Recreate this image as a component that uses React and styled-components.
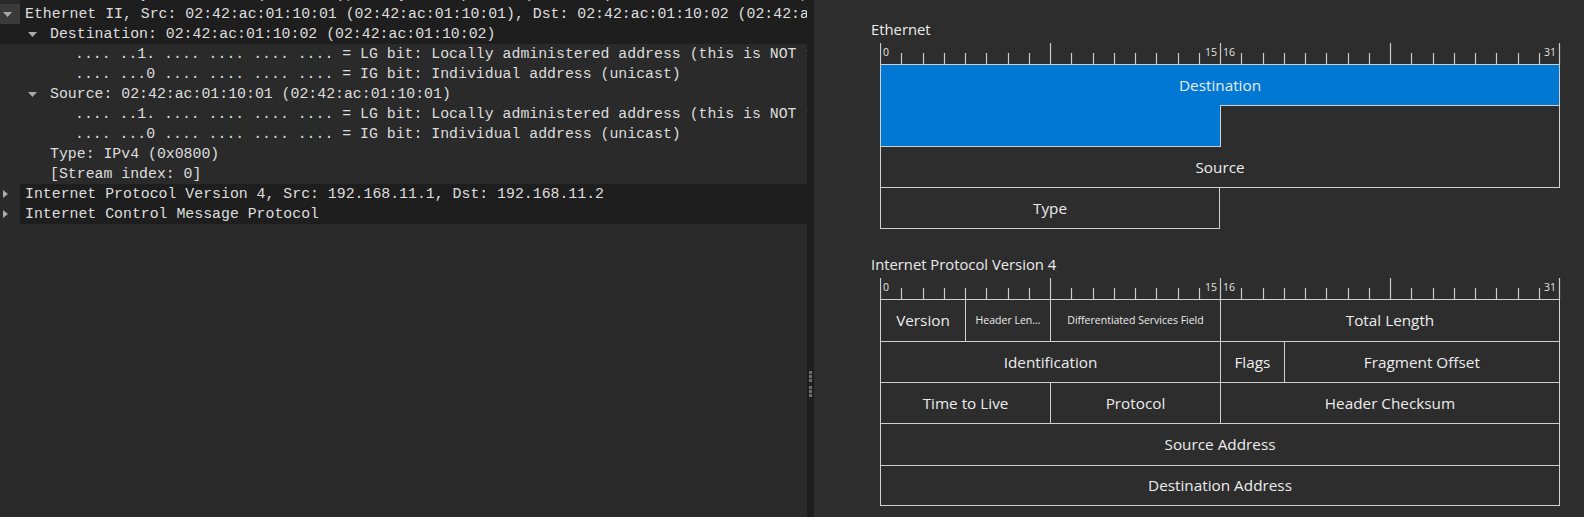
import React from 'react'
import styled, { createGlobalStyle } from 'styled-components'

const GlobalStyle = createGlobalStyle`
  html, body {
    margin: 0;
    padding: 0;
    background: #2a2a2a;
    overflow: hidden;
  }
`

const treeRows = [
  { level: 0, arrow: 'closed', top: true, text: 'Frame 1: 98 bytes on wire (784 bits), 98 bytes captured (784 bits) on interface br-4f2a, id 0' },
  { level: 0, arrow: 'open', top: true, hover: true, text: 'Ethernet II, Src: 02:42:ac:01:10:01 (02:42:ac:01:10:01), Dst: 02:42:ac:01:10:02 (02:42:ac:01:10:02)' },
  { level: 1, arrow: 'open', selected: true, text: 'Destination: 02:42:ac:01:10:02 (02:42:ac:01:10:02)' },
  { level: 2, text: '.... ..1. .... .... .... .... = LG bit: Locally administered address (this is NOT the factory default)' },
  { level: 2, text: '.... ...0 .... .... .... .... = IG bit: Individual address (unicast)' },
  { level: 1, arrow: 'open', text: 'Source: 02:42:ac:01:10:01 (02:42:ac:01:10:01)' },
  { level: 2, text: '.... ..1. .... .... .... .... = LG bit: Locally administered address (this is NOT the factory default)' },
  { level: 2, text: '.... ...0 .... .... .... .... = IG bit: Individual address (unicast)' },
  { level: 1, text: 'Type: IPv4 (0x0800)' },
  { level: 1, text: '[Stream index: 0]' },
  { level: 0, arrow: 'closed', top: true, text: 'Internet Protocol Version 4, Src: 192.168.11.1, Dst: 192.168.11.2' },
  { level: 0, arrow: 'closed', top: true, text: 'Internet Control Message Protocol' },
]

// t r b l = which edges of the segment get a line
const ethernetFields = [
  { row: 1, from: 1, to: 32, name: 'Destination', sel: true, t: 1, r: 1, l: 1 },
  { row: 2, from: 1, to: 16, sel: true, b: 1, l: 1 },
  { row: 2, from: 17, to: 32, t: 1, r: 1, l: 1 },
  { row: 3, from: 1, to: 32, name: 'Source', r: 1, b: 1, l: 1 },
  { row: 4, from: 1, to: 16, name: 'Type', r: 1, b: 1, l: 1 },
]

const ipv4Fields = [
  { row: 1, from: 1, to: 4, name: 'Version' },
  { row: 1, from: 5, to: 8, name: 'Header Len…', small: true },
  { row: 1, from: 9, to: 16, name: 'Differentiated Services Field', small: true },
  { row: 1, from: 17, to: 32, name: 'Total Length' },
  { row: 2, from: 1, to: 16, name: 'Identification' },
  { row: 2, from: 17, to: 19, name: 'Flags' },
  { row: 2, from: 20, to: 32, name: 'Fragment Offset' },
  { row: 3, from: 1, to: 8, name: 'Time to Live' },
  { row: 3, from: 9, to: 16, name: 'Protocol' },
  { row: 3, from: 17, to: 32, name: 'Header Checksum' },
  { row: 4, from: 1, to: 32, name: 'Source Address' },
  { row: 5, from: 1, to: 32, name: 'Destination Address' },
].map(f => ({ ...f, t: 1, l: 1, r: f.to === 32 ? 1 : 0, b: f.row === 5 ? 1 : 0 }))

const BIT = 21.25

const Arrow = ({ open }) =>
  open ? (
    <svg width="9" height="5" viewBox="0 0 9 5">
      <path d="M0 0H9L4.5 5Z" fill="#a9a9a9" />
    </svg>
  ) : (
    <svg width="5" height="8" viewBox="0 0 5 8">
      <path d="M0 0L5 4L0 8Z" fill="#a9a9a9" />
    </svg>
  )

const BitRuler = () => (
  <RulerSvg width="681" height="21" viewBox="0 0 681 21">
    {Array.from({ length: 33 }, (_, k) => {
      const x = Math.round(k * BIT) + 0.5 - (k === 32 ? 1 : 0)
      return <line key={k} x1={x} x2={x} y1={k % 8 === 0 ? 0 : 10} y2={21} stroke="#cacaca" strokeWidth="1.2" />
    })}
    <RulerNum x="3" y="12.7">0</RulerNum>
    <RulerNum x="337" y="12.7" textAnchor="end">15</RulerNum>
    <RulerNum x="343" y="12.7">16</RulerNum>
    <RulerNum x="676" y="12.7" textAnchor="end">31</RulerNum>
  </RulerSvg>
)

const PacketDiagram = ({ title, fields, rows }) => (
  <Section>
    <Title>{title}</Title>
    <BitRuler />
    <FieldGrid $rows={rows}>
      {fields.map((f, i) => (
        <Field
          key={i}
          $row={f.row}
          $from={f.from}
          $to={f.to}
          $t={f.t}
          $r={f.r}
          $b={f.b}
          $l={f.l}
          $selected={f.sel}
          $small={f.small}
        >
          {f.name}
        </Field>
      ))}
    </FieldGrid>
  </Section>
)

export default function App() {
  return (
    <Window>
      <GlobalStyle />
      <TreePane>
        <TreeList>
          {treeRows.map((r, i) => (
            <Row key={i} $level={r.level} $selected={r.selected}>
              <Branch $hover={r.hover}>{r.arrow && <Arrow open={r.arrow === 'open'} />}</Branch>
              <RowText $top={r.top}>{r.text}</RowText>
            </Row>
          ))}
        </TreeList>
      </TreePane>
      <Splitter>
        <Grip>
          {Array.from({ length: 6 }, (_, i) => (
            <GripDot key={i} $gap={i === 3} />
          ))}
        </Grip>
      </Splitter>
      <DiagramPane>
        <PacketDiagram title="Ethernet" fields={ethernetFields} rows={4} />
        <PacketDiagram title="Internet Protocol Version 4" fields={ipv4Fields} rows={5} />
      </DiagramPane>
    </Window>
  )
}

const Window = styled.div`
  display: flex;
  width: 1584px;
  height: 517px;
  overflow: hidden;
`

const TreePane = styled.div`
  width: 807px;
  flex: none;
  background: #2a2a2a;
  overflow: hidden;
  font-family: "Liberation Mono", monospace;
  font-size: 14.85px;
  color: #dedede;
`

const TreeList = styled.div`
  margin-top: -16px;
`

const Row = styled.div`
  display: flex;
  height: 20px;
  padding-left: ${p => p.$level * 25}px;
  background: ${p => (p.$selected ? '#1e1e1e' : 'transparent')};
`

const Branch = styled.div`
  width: 20px;
  flex: none;
  box-sizing: border-box;
  padding-left: 3px;
  display: flex;
  align-items: center;
  background: ${p => (p.$hover ? '#3a3a3a' : 'transparent')};
`

const RowText = styled.div`
  flex: 1;
  min-width: 0;
  padding-left: 5px;
  line-height: 21px;
  white-space: pre;
  overflow: hidden;
  background: ${p => (p.$top ? '#1e1e1e' : 'transparent')};
`

const Splitter = styled.div`
  width: 7px;
  flex: none;
  background: #1e1e1e;
  display: flex;
  justify-content: center;
  padding-top: 371px;
  box-sizing: border-box;
`

const Grip = styled.div`
  display: flex;
  flex-direction: column;
  gap: 1px;
`

const GripDot = styled.div`
  width: 3px;
  height: 3px;
  background: #6f6f6f;
  margin-top: ${p => (p.$gap ? '3px' : '0')};
`

const DiagramPane = styled.div`
  flex: 1;
  background: #2d2d2d;
  padding: 19px 0 0 57px;
  font-family: "Open Sans", sans-serif;
  color: #ececec;
`

const Section = styled.section`
  display: flex;
  flex-direction: column;
  margin-bottom: 25px;
`

const Title = styled.div`
  font-size: 14.8px;
  line-height: 20px;
  height: 20px;
  margin-bottom: 4px;
`

const RulerSvg = styled.svg`
  display: block;
  margin-left: 9px;
`

const RulerNum = styled.text`
  font-family: "Open Sans", sans-serif;
  font-size: 10.5px;
  fill: #e4e4e4;
`

const FieldGrid = styled.div`
  display: grid;
  margin-left: 9px;
  width: 680px;
  grid-template-columns: repeat(32, ${BIT}px);
  grid-template-rows: repeat(${p => p.$rows}, 41.33px);
`

const Field = styled.div`
  grid-column: ${p => p.$from} / ${p => p.$to + 1};
  grid-row: ${p => p.$row};
  box-sizing: border-box;
  display: flex;
  align-items: center;
  justify-content: center;
  border-style: solid;
  border-color: #d0d0d0;
  border-width: ${p => `${p.$t ? 1 : 0}px ${p.$r ? 1 : 0}px ${p.$b ? 1 : 0}px ${p.$l ? 1 : 0}px`};
  background: ${p => (p.$selected ? '#0078d4' : 'transparent')};
  font-size: ${p => (p.$small ? '10.5px' : '15.3px')};
  white-space: nowrap;
  overflow: hidden;
`
